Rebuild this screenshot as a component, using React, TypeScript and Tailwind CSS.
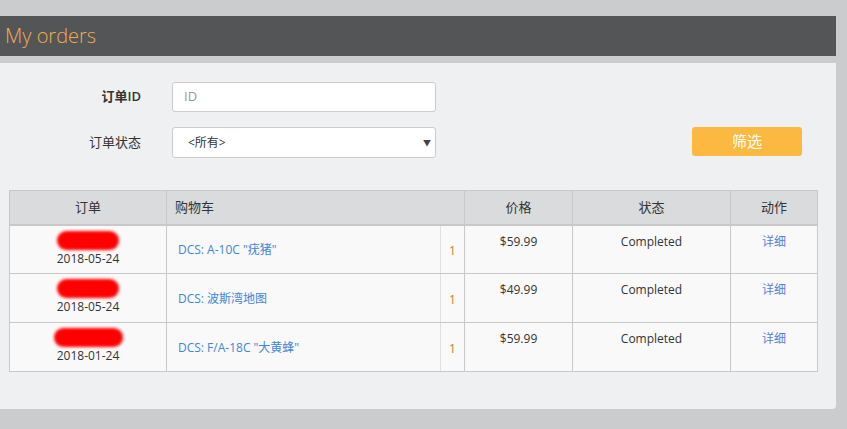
import React from "react";

const font = { fontFamily: '"Open Sans", "Noto Sans CJK SC", sans-serif' };

const rows = [
  { blob: "w-[62px]", date: "2018-05-24", item: 'DCS: A-10C "疣猪"', price: "$59.99" },
  { blob: "w-[62px]", date: "2018-05-24", item: "DCS: 波斯湾地图", price: "$49.99" },
  { blob: "w-[69px]", date: "2018-01-24", item: 'DCS: F/A-18C "大黄蜂"', price: "$59.99" },
];

export default function App() {
  return (
    <div className="w-[847px] h-[429px] bg-[#cbcccd] pt-[16px] text-[#333] text-[12px]" style={font}>
      <div className="w-[836px] h-[40px] bg-[#545557] flex items-center pl-[5px]">
        <span className="text-[20px] font-light text-[#f0ad4e]">My orders</span>
      </div>
      <div className="w-[836px] h-[346px] mt-[7px] bg-[#eff0f2] rounded-br-[4px] pt-[19px]">
        <div className="flex flex-col gap-[15px]">
          <div className="flex items-center">
            <div className="w-[141px] text-right text-[13px] font-semibold text-[#333]">订单ID</div>
            <div className="ml-[31px] w-[264px] h-[30px] bg-white border border-[#ccc] rounded-[3px] flex items-center pl-[11px] text-[13px] text-[#999]">ID</div>
          </div>
          <div className="flex items-start">
            <div className="w-[141px] h-[31px] flex items-center justify-end text-[13px] text-[#333]">订单状态</div>
            <div className="ml-[31px] w-[264px] h-[31px] bg-white border border-[#ccc] rounded-[3px] flex items-center pl-[15px] pr-[4px] text-[12px] text-[#333]">
              <span className="flex-1">&lt;所有&gt;</span>
              <span className="text-[8px] text-[#444]">▼</span>
            </div>
            <div className="ml-[256px] w-[110px] h-[29px] bg-[#fbb941] rounded-[3px] flex items-center justify-center text-white text-[15px]">筛选</div>
          </div>
        </div>
        <div className="ml-[9px] mt-[32px] w-[808px]">
          <table className="border-collapse w-[808px] table-fixed text-[12px]">
            <colgroup>
              <col className="w-[157px]" />
              <col className="w-[274px]" />
              <col className="w-[24px]" />
              <col className="w-[108px]" />
              <col className="w-[158px]" />
              <col className="w-[87px]" />
            </colgroup>
            <thead>
              <tr className="bg-[#dadbdd] h-[34px] text-[13px]">
                <th className="font-normal border border-[#c8c8c8] border-b-2 text-center">订单</th>
                <th colSpan={2} className="font-normal border border-[#c8c8c8] border-b-2 text-left pl-[8px]">购物车</th>
                <th className="font-normal border border-[#c8c8c8] border-b-2 text-center">价格</th>
                <th className="font-normal border border-[#c8c8c8] border-b-2 text-center">状态</th>
                <th className="font-normal border border-[#c8c8c8] border-b-2 text-center">动作</th>
              </tr>
            </thead>
            <tbody>
              {rows.map((r, i) => (
                <tr key={i} className="bg-[#f9f9f9] h-[49px]">
                  <td className="border border-[#c8c8c8] text-center align-top pt-[5px]">
                    <div className="flex flex-col items-center">
                      <div className={`${r.blob} h-[19px] rounded-full bg-[#ff0000] blur-[1.5px]`} />
                      <div className="mt-[1px] leading-[16px]">{r.date}</div>
                    </div>
                  </td>
                  <td className="border border-[#c8c8c8] border-r-[#e0e0e0] pl-[11px] pt-[2px] text-[#3f86d6]">{r.item}</td>
                  <td className="border border-[#c8c8c8] border-l-[#e0e0e0] text-center pt-[3px] text-[#b8862e]">1</td>
                  <td className="border border-[#c8c8c8] text-center align-top pt-[7px]">{r.price}</td>
                  <td className="border border-[#c8c8c8] text-center align-top pt-[7px]">Completed</td>
                  <td className="border border-[#c8c8c8] text-center align-top pt-[7px] text-[#5a7fd6]">详细</td>
                </tr>
              ))}
            </tbody>
          </table>
        </div>
      </div>
    </div>
  );
}
